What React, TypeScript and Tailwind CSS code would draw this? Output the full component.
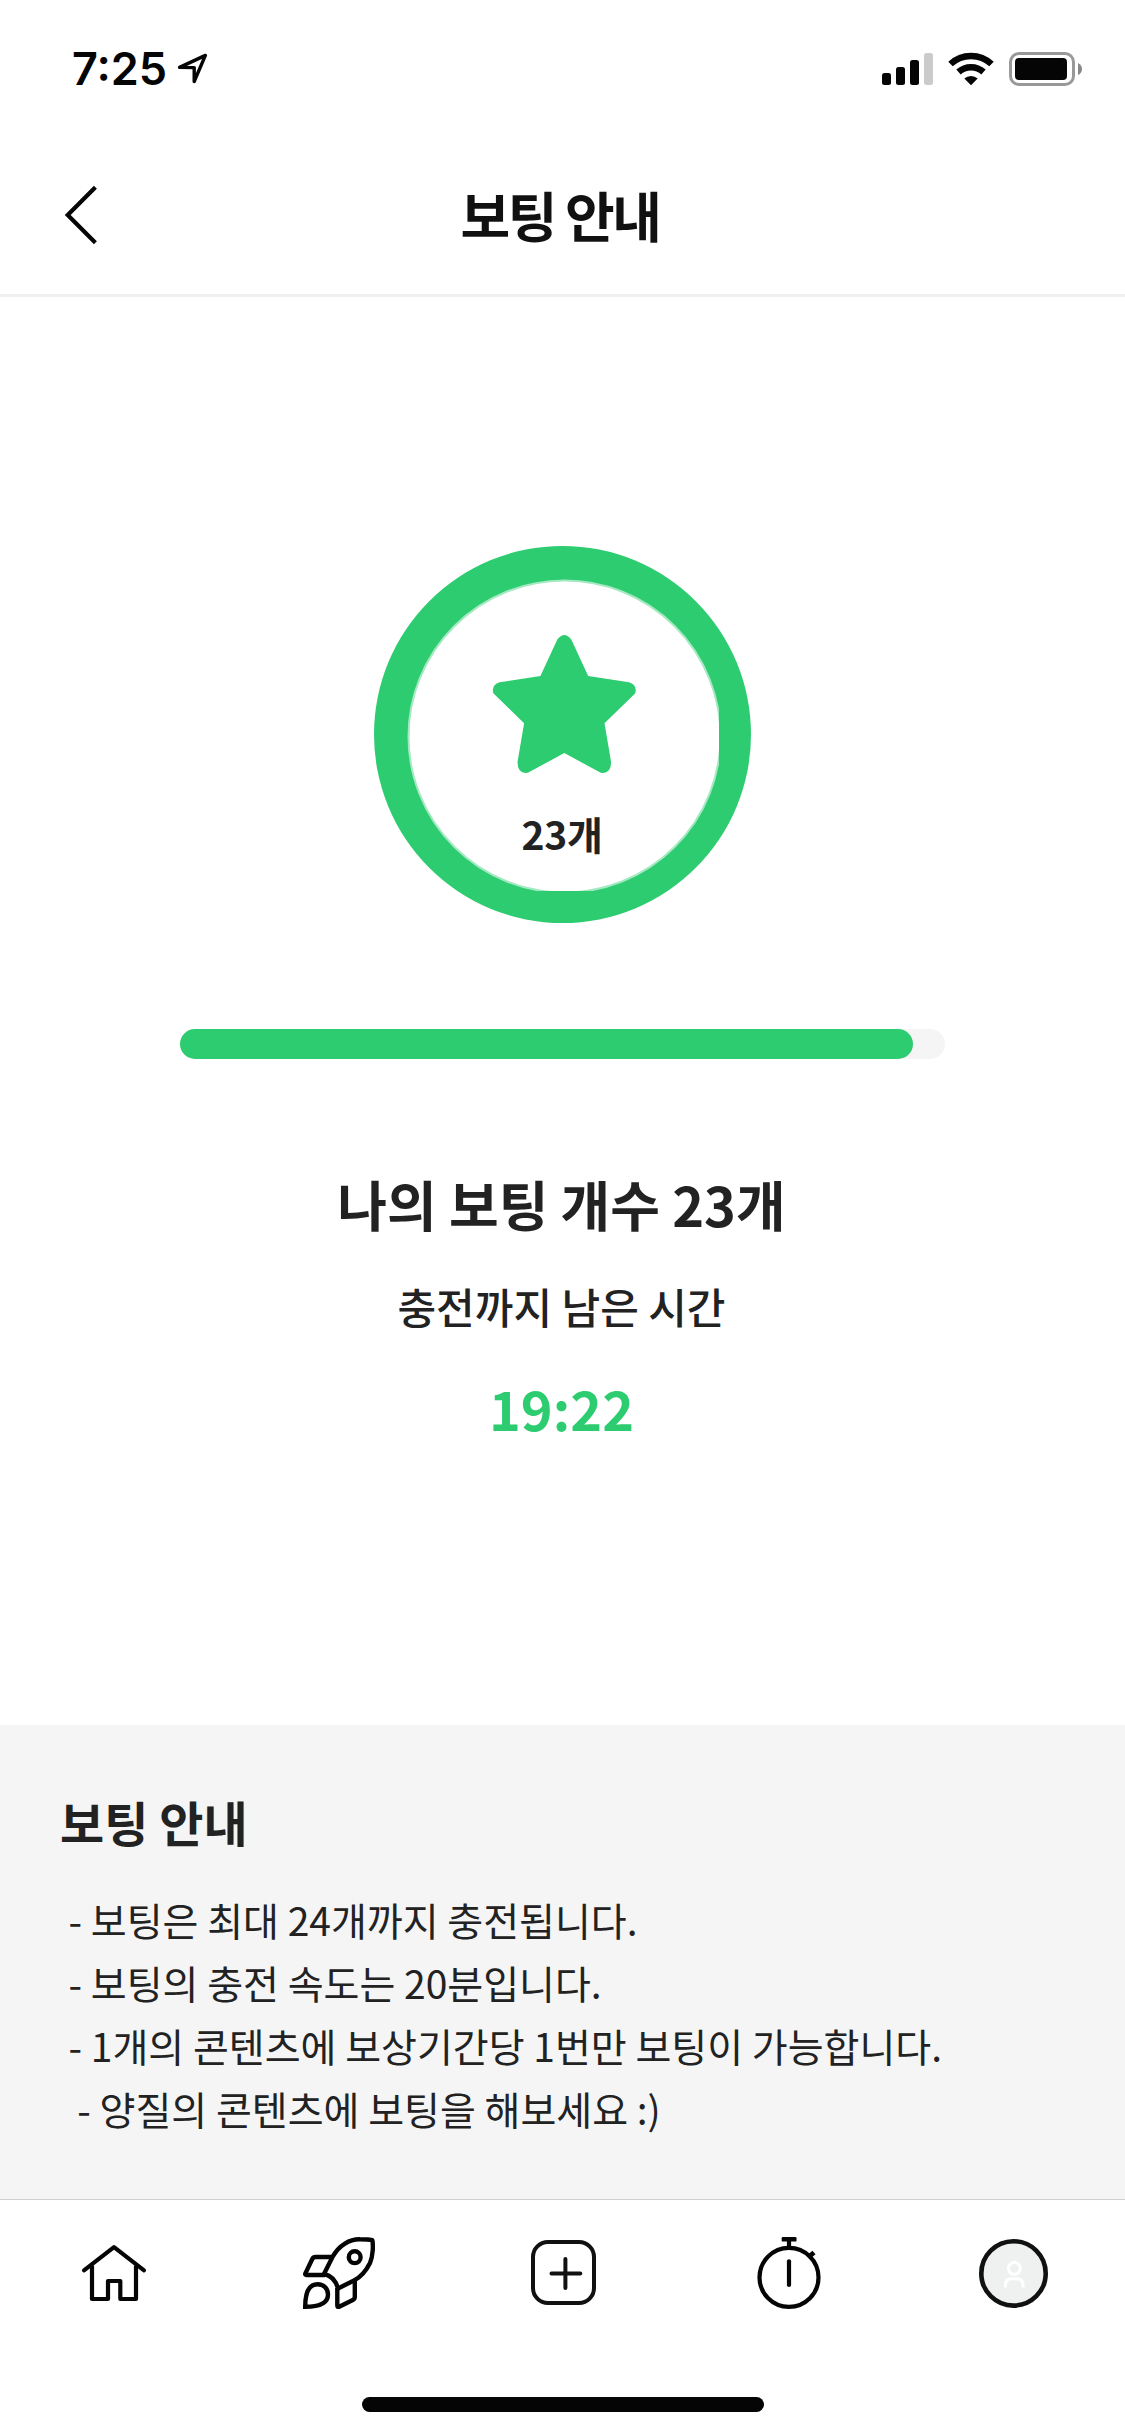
import React from 'react';

type TabItem = {
    name: string,
    icon: React.ReactNode
};

const TOTAL = 24;

const notices = [
    "- 보팅은 최대 24개까지 충전됩니다.",
    "- 보팅의 충전 속도는 20분입니다.",
    "- 1개의 콘텐츠에 보상기간당 1번만 보팅이 가능합니다.",
    " - 양질의 콘텐츠에 보팅을 해보세요 :)"
];

const HomeIcon = () => (
    <svg className="h-[72px] w-[72px]" viewBox="0 0 72 72" fill="none" stroke="#050505" strokeWidth="4.2" strokeLinejoin="round">
        <path d="M6 33.3 36 10.2 66 33.3" strokeLinecap="round" />
        <path d="M14 28.5V62H30V44H42.3V62H58V28.5" />
    </svg>
);

const RocketIcon = () => (
    <svg className="h-[72px] w-[72px]" viewBox="0 0 72 72" fill="none" stroke="#050505" strokeWidth="4.4">
        <path strokeLinejoin="round" d="M21 37 29.5 20C36 8 47 2 57 2.3C62 2.3 66 2.5 69.3 3.1C70.3 8 70.2 18 67 26C63 34 58 40 51 43.5L35 51.5C33 44 28 38.5 21 37Z" />
        <circle cx="51.7" cy="20.2" r="5.9" />
        <path d="M22 38H3.5Q1.7 38 2.4 36.3L9.3 22Q10.3 20 12.5 20H29" />
        <path d="M34.3 51V68.5Q34.3 70.6 36.2 69.7L49.8 63Q51.8 62 51.8 60V43" />
        <path d="M2.2 69.8C2.2 56 5 47.2 14.5 47.2C21 47.2 25 52 25 57.5C25 66 16 69.8 2.2 69.8Z" />
    </svg>
);

const PlusIcon = () => (
    <svg className="h-[72px] w-[72px]" viewBox="0 0 72 72" fill="none" stroke="#111" strokeWidth="4">
        <rect x="5" y="5" width="61" height="61" rx="15" />
        <path d="M23.5 36.5H52.3M37.4 22V51" strokeLinecap="round" />
    </svg>
);

const TimerIcon = () => (
    <svg className="h-[72px] w-[72px]" viewBox="0 0 72 72" fill="none" stroke="#050505" strokeWidth="4.2">
        <circle cx="36" cy="40.4" r="29.5" />
        <path d="M36 2V11" />
        <rect x="28.7" y="0" width="14.8" height="4.6" rx="1.2" fill="#050505" stroke="none" />
        <path d="M36 24.3V48" strokeLinecap="round" />
        <path d="M55 20.5 61 15.5" strokeWidth="4.8" />
    </svg>
);

const ProfileIcon = () => (
    <svg className="h-[72px] w-[72px]" viewBox="0 0 72 72" fill="none">
        <circle cx="35.5" cy="36.4" r="32.2" fill="#eff1f1" stroke="#111" strokeWidth="4.6" />
        <g stroke="#fff" strokeWidth="3">
            <circle cx="36.3" cy="31.4" r="5.9" />
            <path d="M27.5 50.4V48Q27.5 41.7 33.5 41.7H39Q45 41.7 45 48V50.4" />
        </g>
    </svg>
);

const tabs: TabItem[] = [
    { name: "home", icon: <HomeIcon /> },
    { name: "rocket", icon: <RocketIcon /> },
    { name: "plus", icon: <PlusIcon /> },
    { name: "timer", icon: <TimerIcon /> },
    { name: "profile", icon: <ProfileIcon /> }
];

const StatusBar = () => (
    <div className="flex h-[132px] items-start justify-between pl-[72px] pr-[42px] pt-[48px] text-[#050505]">
        <div className="flex items-start gap-[10px]">
            <span className="font-['Inter'] text-[45px] font-semibold leading-[42px]">7:25</span>
            <svg className="mt-[4px] h-[32px] w-[32px]" viewBox="0 0 32 32" fill="none" stroke="#050505" strokeWidth="3.4" strokeLinejoin="round">
                <path d="M2.6 15.4 28.4 3.4 17.2 29.5V15.6Z" />
            </svg>
        </div>
        <svg className="h-[42px] w-[201px]" viewBox="882 48 201 42">
            <rect x="882" y="73" width="9" height="12" rx="2.5" fill="#050505" />
            <rect x="896" y="67" width="9" height="18" rx="2.5" fill="#050505" />
            <rect x="910" y="60" width="9" height="25" rx="2.5" fill="#050505" />
            <rect x="924" y="53" width="9" height="32" rx="2.5" fill="#cbcbcb" />
            <path d="M950.5 64A30 30 0 0 1 991.5 64" fill="none" stroke="#050505" strokeWidth="6.5" />
            <path d="M958.5 72A18.5 18.5 0 0 1 983.5 72" fill="none" stroke="#050505" strokeWidth="6.5" />
            <path d="M964.3 78.6A9.6 9.6 0 0 1 977.7 78.6L971 85.3Z" fill="#050505" />
            <rect x="1010.5" y="53.5" width="63" height="31" rx="8.5" fill="none" stroke="#999" strokeWidth="3" />
            <rect x="1015" y="58" width="52" height="22" rx="4" fill="#050505" />
            <path d="M1078 63Q1082 65 1082 69T1078 75Z" fill="#888" />
        </svg>
    </div>
);

const App = () => {
    const count = 23;

    return (
        <div className="flex h-[2436px] w-[1125px] flex-col overflow-hidden bg-white font-['Noto_Sans_CJK_KR',sans-serif] text-[#222]">
            <StatusBar />

            {/* Header */}
            <header className="grid h-[165px] grid-cols-[1fr_auto_1fr] items-center border-b-[3px] border-[#f0f0f0] pr-[5px] pt-[4px]">
                <svg className="ml-[64px] h-[60px] w-[36px]" viewBox="64 185 36 60" fill="none" stroke="#050505" strokeWidth="4.2">
                    <path d="M95.4 187.3 67.7 215 95.4 242.7" />
                </svg>
                <h1 className="text-[54px] font-bold leading-[80px] tracking-[-2.4px] text-[#111]">보팅 안내</h1>
            </header>

            {/* Voting status */}
            <main className="flex flex-1 flex-col items-center pt-[249px]">
                <div className="grid place-items-center">
                    <svg className="col-start-1 row-start-1 h-[377px] w-[377px]" viewBox="0 0 377 377">
                        <defs>
                            <clipPath id="face">
                                <rect x="33" y="33" width="312" height="312" />
                            </clipPath>
                        </defs>
                        <circle cx="188.5" cy="188.5" r="188.5" fill="#2ecc71" />
                        <circle cx="190.5" cy="190.5" r="156" fill="#fff" stroke="#a5e9c2" strokeWidth="2" clipPath="url(#face)" />
                        <path fill="#2ecc71" d="M183.3 93.5Q190.3 84.5 197.3 93.5L214.2 130 255 136.3Q263.5 139 261.3 147.3L230.5 177.3 237 215.5Q237.5 228.3 226.7 226.8L190.3 207 153.9 226.8Q143.1 228.3 143.6 215.5L150.1 177.3 119.3 147.3Q117.1 139 125.6 136.3L166.4 130Z" />
                    </svg>
                    <span className="col-start-1 row-start-1 mt-[197px] pr-px text-[39px] font-bold leading-[58px] tracking-[-0.3px]">{count}개</span>
                </div>

                <div className="mt-[106px] h-[30px] w-[765px] rounded-full bg-[#f5f5f5]">
                    <div className="h-full rounded-full bg-[#2ecc71]" style={{ width: `${(count / TOTAL) * 100}%` }} />
                </div>

                <h2 className="mt-[105px] pr-[2px] text-[54px] font-bold leading-[80px]">나의 보팅 개수 {count}개</h2>
                <p className="mt-[31px] pr-[2px] text-[42px] font-medium leading-[62px]">충전까지 남은 시간</p>
                <p className="mt-[31px] pr-[2px] text-[54px] font-bold leading-[80px] text-[#2ecc71]">19:22</p>
            </main>

            {/* Notice */}
            <section className="h-[474px] bg-[#f5f5f5] pl-[60px] pt-[60px]">
                <h3 className="text-[48px] font-bold leading-[72px]">보팅 안내</h3>
                <ul className="mt-[31px] pl-[8.5px] text-[39px] leading-[63px]">
                    {notices.map((element, index) => (
                        <li key={index} className="whitespace-pre">{element}</li>
                    ))}
                </ul>
            </section>

            {/* Bottom tabs */}
            <nav className="grid h-[198px] grid-cols-5 items-start border-t border-[#d0d0d0] pt-[37px]">
                {tabs.map((tab) => (
                    <div key={tab.name} className="flex justify-center pl-[3px]">{tab.icon}</div>
                ))}
            </nav>
            <div className="mx-auto mb-[24px] h-[15px] w-[402px] rounded-full bg-[#050505]" />
        </div>
    );
};

export default App;
